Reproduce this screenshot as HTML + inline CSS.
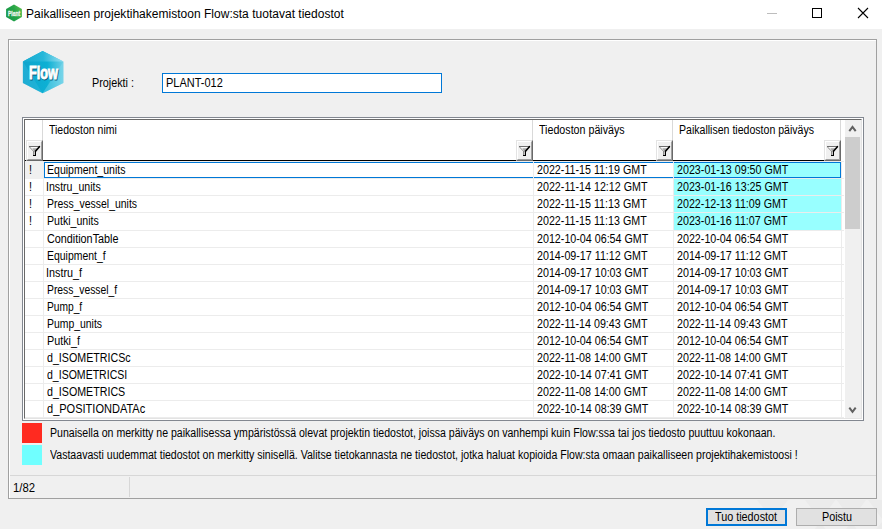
<!DOCTYPE html>
<html lang="fi">
<head>
<meta charset="utf-8">
<title>Paikalliseen projektihakemistoon Flow:sta tuotavat tiedostot</title>
<style>
html,body{margin:0;padding:0;}
body{width:882px;height:529px;overflow:hidden;background:#f0f0f0;position:relative;font-family:"Liberation Sans",sans-serif;font-size:11px;color:#000;}
.a{position:absolute;}
.t{position:absolute;white-space:nowrap;line-height:16px;height:16px;font-size:11px;}
#titlebar{left:0;top:0;width:882px;height:29px;background:#fff;}
#title{left:26px;top:6px;letter-spacing:0.017px;font-size:12px;line-height:16px;white-space:nowrap;}
.s{font-size:12px;transform-origin:0 0;}
.hl{position:absolute;height:1px;}
.vl{position:absolute;width:1px;}
.fbtn{position:absolute;width:17px;height:21px;top:140px;background:#f0f0f0;box-sizing:border-box;border-top:1px solid #e3e3e3;border-left:1px solid #e3e3e3;border-right:1px solid #696969;border-bottom:1px solid #696969;}
.fbtn:after{content:"";position:absolute;left:0;top:0;right:0;bottom:0;border-right:1px solid #a0a0a0;border-bottom:1px solid #a0a0a0;border-top:1px solid #fff;border-left:1px solid #fff;}
.fbtn svg{position:absolute;left:-1px;top:-1px;}
.cy{position:absolute;background:#98ffff;left:674px;width:167px;}
</style>
</head>
<body>
<div id="titlebar" class="a"></div>
<svg class="a" style="left:5px;top:4px" width="18" height="18" viewBox="0 0 18 18">
<defs><linearGradient id="g1" x1="0" y1="0.6" x2="1" y2="0.2"><stop offset="0" stop-color="#169848"/><stop offset="0.55" stop-color="#27a548"/><stop offset="1" stop-color="#58bd4c"/></linearGradient></defs>
<polygon points="9,0.6 16.9,4.9 16.9,13.1 9,17.4 1.1,13.1 1.1,4.9" fill="url(#g1)"/>
<text x="3.1" y="11.7" font-family="Liberation Sans, sans-serif" font-size="6.4" font-weight="bold" fill="#eef4ee" stroke="#eef4ee" stroke-width="0.3" textLength="12" lengthAdjust="spacingAndGlyphs">Plant</text>
</svg>
<div id="title" class="a">Paikalliseen projektihakemistoon Flow:sta tuotavat tiedostot</div>
<!-- caption buttons -->
<div class="a" style="left:767px;top:13px;width:10px;height:1px;background:#bdbdbd"></div>
<div class="a" style="left:812px;top:8px;width:8px;height:8px;border:1px solid #000;"></div>
<svg class="a" style="left:857px;top:7px" width="12" height="12" viewBox="0 0 12 12"><path d="M1 1 L11 11 M11 1 L1 11" stroke="#000" stroke-width="1.1" fill="none"/></svg>

<!-- etched panel -->
<div class="a" style="left:9px;top:40px;width:868px;height:459px;border:1px solid #fff;box-sizing:border-box;border-top-color:#fff"></div>
<div class="a" style="left:8px;top:39px;width:869px;height:460px;border:1px solid #a0a0a0;box-sizing:border-box;"></div>

<!-- Flow logo -->
<svg class="a" style="left:20px;top:48px" width="46" height="48" viewBox="20 48 46 48">
<defs>
<linearGradient id="f1" x1="0" y1="0" x2="1" y2="0"><stop offset="0" stop-color="#18abd0"/><stop offset="0.5" stop-color="#25b7d9"/><stop offset="1" stop-color="#9adff0"/></linearGradient>
<linearGradient id="f2" x1="0" y1="0" x2="1" y2="0"><stop offset="0" stop-color="#10a5cd"/><stop offset="0.6" stop-color="#0cb0d4"/><stop offset="1" stop-color="#6fd0e6"/></linearGradient>
<linearGradient id="f3" x1="0" y1="0" x2="1" y2="0"><stop offset="0" stop-color="#12a6cd"/><stop offset="0.5" stop-color="#0bb1d5"/><stop offset="1" stop-color="#3cc0de"/></linearGradient>
</defs>
<polygon points="42.6,51 63.4,61.4 63.4,83.1 42.6,93.2 22.9,83.1 22.9,61.4" fill="url(#f2)"/>
<polygon points="42.6,51 63.4,61.4 22.9,61.4" fill="url(#f1)"/>
<polygon points="63.4,61.4 63.4,83.1 42.6,93.2" fill="#8adcf0" opacity="0.38"/>
<polygon points="22.9,61.4 22.9,83.1 42.6,93.2" fill="#40bde0" opacity="0.35"/>
<text x="29.7" y="79.8" font-family="Liberation Sans, sans-serif" font-weight="bold" font-size="18.5" fill="#0b5f7c" stroke="#0b5f7c" stroke-width="0.9" textLength="29" lengthAdjust="spacingAndGlyphs">Flow</text>
<text x="29" y="78.9" font-family="Liberation Sans, sans-serif" font-weight="bold" font-size="18.5" fill="#fff" stroke="#fff" stroke-width="1" textLength="29" lengthAdjust="spacingAndGlyphs">Flow</text>
</svg>


<div class="a" style="left:162px;top:73px;width:280px;height:20px;box-sizing:border-box;border:1px solid #0078d7;background:#fff"></div>


<!-- grid frame -->
<div class="a" style="left:22px;top:117px;width:842px;height:304px;box-sizing:border-box;border:1px solid #828790;background:#fff"></div>
<div class="a" style="left:24px;top:119px;width:838px;height:300px;box-sizing:border-box;border-top:1px solid #696969;border-left:1px solid #696969;border-right:1px solid #e3e3e3;border-bottom:1px solid #e3e3e3;background:#fff"></div>

<div class="vl" style="left:42px;top:120px;height:40px;background:#d9d9d9"></div>
<div class="vl" style="left:532px;top:120px;height:40px;background:#d9d9d9"></div>
<div class="vl" style="left:672px;top:120px;height:40px;background:#d9d9d9"></div>
<div class="vl" style="left:840px;top:120px;height:40px;background:#d9d9d9"></div>
<div class="hl" style="left:25px;top:160px;width:816px;background:#000"></div>
<div class="fbtn" style="left:26px"><svg width="17" height="21" viewBox="0 0 17 21"><polygon points="4.5,7 13,7 9,11.5 8,11.5" fill="#fafafa"/><polygon points="6.3,8.3 12,8.3 9.2,11.6 8.4,11.6" fill="#a6a6a6"/><rect x="8" y="11" width="1" height="4" fill="#c8c8c8"/><rect x="3" y="6" width="11" height="1" fill="#6e6e6e"/><path d="M3.5 7 L7.7 11.4" stroke="#808080" stroke-width="0.9" fill="none"/><rect x="7" y="11" width="1" height="4" fill="#8c8c8c"/><path d="M13.4 6.7 L9.5 11.2" stroke="#000" stroke-width="1.6" stroke-linecap="round" fill="none"/><rect x="9" y="11" width="1" height="5" fill="#000"/><rect x="7" y="15" width="3" height="1" fill="#000"/></svg></div>
<div class="fbtn" style="left:516px"><svg width="17" height="21" viewBox="0 0 17 21"><polygon points="4.5,7 13,7 9,11.5 8,11.5" fill="#fafafa"/><polygon points="6.3,8.3 12,8.3 9.2,11.6 8.4,11.6" fill="#a6a6a6"/><rect x="8" y="11" width="1" height="4" fill="#c8c8c8"/><rect x="3" y="6" width="11" height="1" fill="#6e6e6e"/><path d="M3.5 7 L7.7 11.4" stroke="#808080" stroke-width="0.9" fill="none"/><rect x="7" y="11" width="1" height="4" fill="#8c8c8c"/><path d="M13.4 6.7 L9.5 11.2" stroke="#000" stroke-width="1.6" stroke-linecap="round" fill="none"/><rect x="9" y="11" width="1" height="5" fill="#000"/><rect x="7" y="15" width="3" height="1" fill="#000"/></svg></div>
<div class="fbtn" style="left:656px"><svg width="17" height="21" viewBox="0 0 17 21"><polygon points="4.5,7 13,7 9,11.5 8,11.5" fill="#fafafa"/><polygon points="6.3,8.3 12,8.3 9.2,11.6 8.4,11.6" fill="#a6a6a6"/><rect x="8" y="11" width="1" height="4" fill="#c8c8c8"/><rect x="3" y="6" width="11" height="1" fill="#6e6e6e"/><path d="M3.5 7 L7.7 11.4" stroke="#808080" stroke-width="0.9" fill="none"/><rect x="7" y="11" width="1" height="4" fill="#8c8c8c"/><path d="M13.4 6.7 L9.5 11.2" stroke="#000" stroke-width="1.6" stroke-linecap="round" fill="none"/><rect x="9" y="11" width="1" height="5" fill="#000"/><rect x="7" y="15" width="3" height="1" fill="#000"/></svg></div>
<div class="fbtn" style="left:824px"><svg width="17" height="21" viewBox="0 0 17 21"><polygon points="4.5,7 13,7 9,11.5 8,11.5" fill="#fafafa"/><polygon points="6.3,8.3 12,8.3 9.2,11.6 8.4,11.6" fill="#a6a6a6"/><rect x="8" y="11" width="1" height="4" fill="#c8c8c8"/><rect x="3" y="6" width="11" height="1" fill="#6e6e6e"/><path d="M3.5 7 L7.7 11.4" stroke="#808080" stroke-width="0.9" fill="none"/><rect x="7" y="11" width="1" height="4" fill="#8c8c8c"/><path d="M13.4 6.7 L9.5 11.2" stroke="#000" stroke-width="1.6" stroke-linecap="round" fill="none"/><rect x="9" y="11" width="1" height="5" fill="#000"/><rect x="7" y="15" width="3" height="1" fill="#000"/></svg></div>
<div class="a" style="left:25px;top:161px;width:18px;height:18px;background:#f0f0f0"></div>
<div class="cy" style="top:162px;height:16px"></div>
<div class="cy" style="top:179px;height:16px"></div>
<div class="cy" style="top:196px;height:16px"></div>
<div class="cy" style="top:213px;height:17px"></div>
<div class="hl" style="left:25px;top:161px;width:819px;background:#ececec"></div>
<div class="hl" style="left:25px;top:178px;width:819px;background:#ececec"></div>
<div class="hl" style="left:25px;top:195px;width:819px;background:#ececec"></div>
<div class="hl" style="left:25px;top:212px;width:819px;background:#ececec"></div>
<div class="hl" style="left:25px;top:230px;width:819px;background:#ececec"></div>
<div class="hl" style="left:25px;top:247px;width:819px;background:#ececec"></div>
<div class="hl" style="left:25px;top:264px;width:819px;background:#ececec"></div>
<div class="hl" style="left:25px;top:281px;width:819px;background:#ececec"></div>
<div class="hl" style="left:25px;top:298px;width:819px;background:#ececec"></div>
<div class="hl" style="left:25px;top:315px;width:819px;background:#ececec"></div>
<div class="hl" style="left:25px;top:332px;width:819px;background:#ececec"></div>
<div class="hl" style="left:25px;top:349px;width:819px;background:#ececec"></div>
<div class="hl" style="left:25px;top:366px;width:819px;background:#ececec"></div>
<div class="hl" style="left:25px;top:383px;width:819px;background:#ececec"></div>
<div class="hl" style="left:25px;top:400px;width:819px;background:#ececec"></div>
<div class="hl" style="left:25px;top:417px;width:819px;background:#ececec"></div>
<div class="a" style="left:25px;top:161px;width:18px;height:18px;background:#f0f0f0"></div>
<div class="vl" style="left:43px;top:161px;height:257px;background:#ececec"></div>
<div class="vl" style="left:533px;top:161px;height:257px;background:#ececec"></div>
<div class="vl" style="left:673px;top:161px;height:257px;background:#ececec"></div>
<div class="vl" style="left:841px;top:161px;height:257px;background:#ececec"></div>
<div class="t s" style="left:28.5px;top:162px;transform:scaleX(0.9)">!</div>
<div class="t s" style="left:28.5px;top:179px;transform:scaleX(0.9)">!</div>
<div class="t s" style="left:28.5px;top:196px;transform:scaleX(0.9)">!</div>
<div class="t s" style="left:28.5px;top:213px;transform:scaleX(0.9)">!</div>
<div class="hl" style="left:44px;top:162px;width:489px;background:#0078d7"></div>
<div class="hl" style="left:44px;top:177px;width:489px;background:#0078d7"></div>
<div class="hl" style="left:534px;top:162px;width:139px;background:#0078d7"></div>
<div class="hl" style="left:534px;top:177px;width:139px;background:#0078d7"></div>
<div class="hl" style="left:674px;top:162px;width:167px;background:#0078d7"></div>
<div class="hl" style="left:674px;top:177px;width:167px;background:#0078d7"></div>
<div class="vl" style="left:44px;top:162px;height:16px;background:#0078d7"></div>
<div class="vl" style="left:840px;top:162px;height:16px;background:#0078d7"></div>
<div class="a" style="left:845px;top:120px;width:16px;height:298px;background:#f0f0f0"></div>
<div class="a" style="left:845px;top:137px;width:15px;height:92px;background:#cdcdcd"></div>
<svg class="a" style="left:845px;top:120px" width="16" height="17" viewBox="0 0 16 17"><path d="M4.3 11.2 L7.5 7 L10.7 11.2" stroke="#606060" stroke-width="2" fill="none"/></svg>
<svg class="a" style="left:845px;top:401px" width="16" height="17" viewBox="0 0 16 17"><path d="M4.3 6.6 L7.5 10.8 L10.7 6.6" stroke="#606060" stroke-width="2" fill="none"/></svg>
<div class="a" style="left:22px;top:423px;width:20px;height:20px;background:#ff2a20"></div>
<div class="a" style="left:22px;top:445px;width:20px;height:20px;background:#70ffff"></div>
<div class="hl" style="left:10px;top:475px;width:866px;background:#d7d7d7"></div>
<div class="vl" style="left:129px;top:477px;height:20px;background:#d7d7d7"></div>
<div class="t s" id="proj" style="left:92.00px;top:75px;transform:scaleX(0.9000)">Projekti :</div>
<div class="t s" id="plant" style="left:166.00px;top:75px;transform:scaleX(0.9164)">PLANT-012</div>
<div class="t s" id="h1" style="left:49.00px;top:122px;transform:scaleX(0.8739)">Tiedoston nimi</div>
<div class="t s" id="h2" style="left:539.00px;top:122px;transform:scaleX(0.8895)">Tiedoston päiväys</div>
<div class="t s" id="h3" style="left:679.00px;top:122px;transform:scaleX(0.8803)">Paikallisen tiedoston päiväys</div>
<div class="t s" id="n0" style="left:47.00px;top:162px;transform:scaleX(0.8772)">Equipment_units</div>
<div class="t s" id="a0" style="left:537.00px;top:162px;transform:scaleX(0.8920)">2022-11-15 11:19 GMT</div>
<div class="t s" id="b0" style="left:677.00px;top:162px;transform:scaleX(0.8920)">2023-01-13 09:50 GMT</div>
<div class="t s" id="n1" style="left:46.20px;top:179px;transform:scaleX(0.8833)">Instru_units</div>
<div class="t s" id="a1" style="left:537.00px;top:179px;transform:scaleX(0.8920)">2022-11-14 12:12 GMT</div>
<div class="t s" id="b1" style="left:677.00px;top:179px;transform:scaleX(0.8920)">2023-01-16 13:25 GMT</div>
<div class="t s" id="n2" style="left:47.00px;top:196px;transform:scaleX(0.8707)">Press_vessel_units</div>
<div class="t s" id="a2" style="left:537.00px;top:196px;transform:scaleX(0.8920)">2022-11-15 11:13 GMT</div>
<div class="t s" id="b2" style="left:677.00px;top:196px;transform:scaleX(0.8920)">2022-12-13 11:09 GMT</div>
<div class="t s" id="n3" style="left:47.00px;top:213px;transform:scaleX(0.8827)">Putki_units</div>
<div class="t s" id="a3" style="left:537.00px;top:213px;transform:scaleX(0.8920)">2022-11-15 11:13 GMT</div>
<div class="t s" id="b3" style="left:677.00px;top:213px;transform:scaleX(0.8920)">2023-01-16 11:07 GMT</div>
<div class="t s" id="n4" style="left:47.00px;top:231px;transform:scaleX(0.9000)">ConditionTable</div>
<div class="t s" id="a4" style="left:537.00px;top:231px;transform:scaleX(0.8920)">2012-10-04 06:54 GMT</div>
<div class="t s" id="b4" style="left:677.00px;top:231px;transform:scaleX(0.8920)">2022-10-04 06:54 GMT</div>
<div class="t s" id="n5" style="left:47.00px;top:248px;transform:scaleX(0.8700)">Equipment_f</div>
<div class="t s" id="a5" style="left:537.00px;top:248px;transform:scaleX(0.8920)">2014-09-17 11:12 GMT</div>
<div class="t s" id="b5" style="left:677.00px;top:248px;transform:scaleX(0.8920)">2014-09-17 11:12 GMT</div>
<div class="t s" id="n6" style="left:46.20px;top:265px;transform:scaleX(0.9000)">Instru_f</div>
<div class="t s" id="a6" style="left:537.00px;top:265px;transform:scaleX(0.8920)">2014-09-17 10:03 GMT</div>
<div class="t s" id="b6" style="left:677.00px;top:265px;transform:scaleX(0.8920)">2014-09-17 10:03 GMT</div>
<div class="t s" id="n7" style="left:47.00px;top:282px;transform:scaleX(0.8630)">Press_vessel_f</div>
<div class="t s" id="a7" style="left:537.00px;top:282px;transform:scaleX(0.8920)">2014-09-17 10:03 GMT</div>
<div class="t s" id="b7" style="left:677.00px;top:282px;transform:scaleX(0.8920)">2014-09-17 10:03 GMT</div>
<div class="t s" id="n8" style="left:47.00px;top:299px;transform:scaleX(0.8514)">Pump_f</div>
<div class="t s" id="a8" style="left:537.00px;top:299px;transform:scaleX(0.8920)">2012-10-04 06:54 GMT</div>
<div class="t s" id="b8" style="left:677.00px;top:299px;transform:scaleX(0.8920)">2012-10-04 06:54 GMT</div>
<div class="t s" id="n9" style="left:47.00px;top:316px;transform:scaleX(0.8679)">Pump_units</div>
<div class="t s" id="a9" style="left:537.00px;top:316px;transform:scaleX(0.8920)">2022-11-14 09:43 GMT</div>
<div class="t s" id="b9" style="left:677.00px;top:316px;transform:scaleX(0.8920)">2022-11-14 09:43 GMT</div>
<div class="t s" id="n10" style="left:47.00px;top:333px;transform:scaleX(0.9000)">Putki_f</div>
<div class="t s" id="a10" style="left:537.00px;top:333px;transform:scaleX(0.8920)">2012-10-04 06:54 GMT</div>
<div class="t s" id="b10" style="left:677.00px;top:333px;transform:scaleX(0.8920)">2012-10-04 06:54 GMT</div>
<div class="t s" id="n11" style="left:47.00px;top:350px;transform:scaleX(0.8893)">d_ISOMETRICSc</div>
<div class="t s" id="a11" style="left:537.00px;top:350px;transform:scaleX(0.8920)">2022-11-08 14:00 GMT</div>
<div class="t s" id="b11" style="left:677.00px;top:350px;transform:scaleX(0.8920)">2022-11-08 14:00 GMT</div>
<div class="t s" id="n12" style="left:47.00px;top:367px;transform:scaleX(0.8778)">d_ISOMETRICSI</div>
<div class="t s" id="a12" style="left:537.00px;top:367px;transform:scaleX(0.8920)">2022-10-14 07:41 GMT</div>
<div class="t s" id="b12" style="left:677.00px;top:367px;transform:scaleX(0.8920)">2022-10-14 07:41 GMT</div>
<div class="t s" id="n13" style="left:47.00px;top:384px;transform:scaleX(0.8885)">d_ISOMETRICS</div>
<div class="t s" id="a13" style="left:537.00px;top:384px;transform:scaleX(0.8920)">2022-11-08 14:00 GMT</div>
<div class="t s" id="b13" style="left:677.00px;top:384px;transform:scaleX(0.8920)">2022-11-08 14:00 GMT</div>
<div class="t s" id="n14" style="left:47.00px;top:401px;transform:scaleX(0.9189)">d_POSITIONDATAc</div>
<div class="t s" id="a14" style="left:537.00px;top:401px;transform:scaleX(0.8920)">2022-10-14 08:39 GMT</div>
<div class="t s" id="b14" style="left:677.00px;top:401px;transform:scaleX(0.8920)">2022-10-14 08:39 GMT</div>
<div class="t s" id="leg1" style="left:50.00px;top:425px;transform:scaleX(0.8805)">Punaisella on merkitty ne paikallisessa ympäristössä olevat projektin tiedostot, joissa päiväys on vanhempi kuin Flow:ssa tai jos tiedosto puuttuu kokonaan.</div>
<div class="t s" id="leg2" style="left:50.00px;top:447px;transform:scaleX(0.8810)">Vastaavasti uudemmat tiedostot on merkitty sinisellä. Valitse tietokannasta ne tiedostot, jotka haluat kopioida Flow:sta omaan paikalliseen projektihakemistoosi !</div>
<div class="t s" id="status" style="left:13.00px;top:480px;transform:scaleX(0.9450)">1/82</div>
<svg class="a" style="left:740px;top:500px" width="142" height="29" viewBox="740 500 142 29"><g fill="#ebebeb"><polygon points="757,500 788,500 772.5,520"/><polygon points="805,500 835.5,500 820.2,520"/><polygon points="836.6,500 866,500 851.3,520"/><polygon points="868,500 898,500 883,520"/><polygon points="820.2,522 835.8,542 804.6,542"/><polygon points="851.3,522 866.9,542 835.7,542"/><polygon points="882,522 898,542 866,542"/></g></svg>
<div class="a" style="left:706px;top:508px;width:81px;height:18px;box-sizing:border-box;border:2px solid #0078d7;background:#e1e1e1"></div>
<div class="t s" style="left:714.5px;top:509px;transform:scaleX(0.9)">Tuo tiedostot</div>
<div class="a" style="left:796px;top:508px;width:81px;height:18px;box-sizing:border-box;border:1px solid #adadad;background:#e1e1e1"></div>
<div class="t s" style="left:821.5px;top:509px;transform:scaleX(0.9)">Poistu</div>
</body>
</html>
